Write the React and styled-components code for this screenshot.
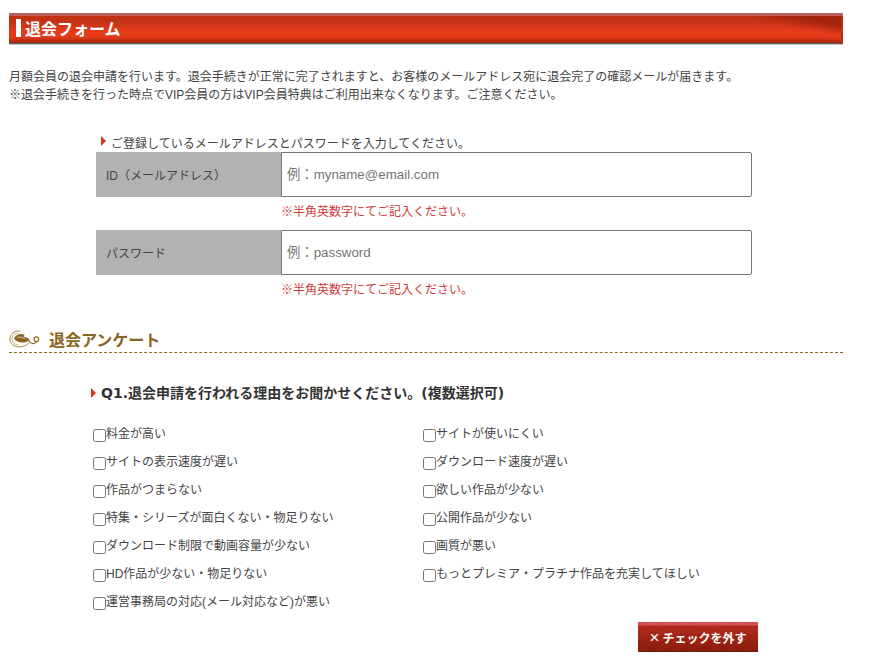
import styled, { createGlobalStyle } from 'styled-components';

const GlobalStyle = createGlobalStyle`
    html, body { margin: 0; background: #fff; }
    body {
        font-family: "Liberation Sans", "Noto Sans CJK JP", sans-serif;
        font-size: 12px;
        color: #333;
    }
`;

const reasonsLeft = [
    '料金が高い',
    'サイトの表示速度が遅い',
    '作品がつまらない',
    '特集・シリーズが面白くない・物足りない',
    'ダウンロード制限で動画容量が少ない',
    'HD作品が少ない・物足りない',
    '運営事務局の対応(メール対応など)が悪い',
];

const reasonsRight = [
    'サイトが使いにくい',
    'ダウンロード速度が遅い',
    '欲しい作品が少ない',
    '公開作品が少ない',
    '画質が悪い',
    'もっとプレミア・プラチナ作品を充実してほしい',
];

const Arrow = () => (
    <ArrowIcon viewBox="0 0 5 10"><path d="M0 0 L5 5 L0 10 Z" fill="#d9341a" /></ArrowIcon>
);

const Ornament = () => (
    <svg width="31" height="18" viewBox="0 0 31 18">
        <path d="M11 1 C5 0.5 0.8 4.2 0.8 9 C0.8 13.8 5 17.2 11 16.8 C15 16.5 18 15.2 20 12.8" fill="none" stroke="#a98a3c" strokeWidth="1" />
        <path d="M9 3 C5 3.6 3 6 3 9 C3 12 5 14.2 9 14.8" fill="none" stroke="#a98a3c" strokeWidth="0.7" />
        <path d="M5 8.5 C6.5 4.5 11 2.8 16 4.6 C13.8 5.8 14.5 7.2 17 7.6 C19.2 8 20.2 9 20.8 10.2 C15.5 13.6 8 13.4 5 8.5 Z" fill="#8a6420" />
        <path d="M8.5 7.6 C11 6.4 14 7.4 16 9" fill="none" stroke="#e8dcc0" strokeWidth="0.8" />
        <path d="M20 10.8 C21.5 14.4 26 14.4 28 11.5" fill="none" stroke="#8a6420" strokeWidth="1.1" />
        <circle cx="27.4" cy="9.2" r="2.3" fill="none" stroke="#8a6420" strokeWidth="1.1" />
    </svg>
);

const App = () => {
    return (
        <Page>
            <GlobalStyle />
            <TitleBar><TitleMark />退会フォーム</TitleBar>
            <Lead>
                月額会員の退会申請を行います。退会手続きが正常に完了されますと、お客様のメールアドレス宛に退会完了の確認メールが届きます。<br />
                ※退会手続きを行った時点でVIP会員の方はVIP会員特典はご利用出来なくなります。ご注意ください。
            </Lead>
            <FormArea>
                <FormNote><Arrow />ご登録しているメールアドレスとパスワードを入力してください。</FormNote>
                <FieldRow>
                    <FieldLabel>ID（メールアドレス）</FieldLabel>
                    <FieldInput placeholder="例：myname@email.com" />
                </FieldRow>
                <FieldError>※半角英数字にてご記入ください。</FieldError>
                <FieldRow>
                    <FieldLabel>パスワード</FieldLabel>
                    <FieldInput placeholder="例：password" />
                </FieldRow>
                <FieldError>※半角英数字にてご記入ください。</FieldError>
            </FormArea>
            <SurveyTitle><Ornament />退会アンケート</SurveyTitle>
            <Question><Arrow />Q1.退会申請を行われる理由をお聞かせください。(複数選択可)</Question>
            <Choices>
                <ChoiceColumn>
                    {reasonsLeft.map((text) => (
                        <Choice key={text}><ChoiceBox type="checkbox" />{text}</Choice>
                    ))}
                </ChoiceColumn>
                <ChoiceColumn>
                    {reasonsRight.map((text) => (
                        <Choice key={text}><ChoiceBox type="checkbox" />{text}</Choice>
                    ))}
                </ChoiceColumn>
            </Choices>
            <ButtonRow>
                <ClearButton type="button"><ClearMark>×</ClearMark>チェックを外す</ClearButton>
            </ButtonRow>
        </Page>
    );
};

const Page = styled.div`
    width: 891px;
    height: 668px;
    overflow: hidden;
    padding: 13px 0 0 9px;
    box-sizing: border-box;
`;

const TitleBar = styled.h2`
    display: flex;
    align-items: center;
    gap: 4px;
    width: 834px;
    height: 32px;
    margin: 0;
    padding: 0 0 2px 7px;
    box-sizing: border-box;
    color: #fff;
    font-size: 16px;
    font-weight: bold;
    background:
        linear-gradient(#bc6058, #bc6058) top / 100% 3px no-repeat,
        linear-gradient(#5f5f5f, #5f5f5f) 0 30px / 100% 1px no-repeat,
        linear-gradient(#c4c4c4, #c4c4c4) 0 31px / 100% 1px no-repeat,
        linear-gradient(#b8300f, #b8300f) right 0 / 2px 30px no-repeat,
        linear-gradient(191deg, #a3240d 0, #a3240d 9px, rgba(163, 36, 13, 0) 20px) right 3px / 90px 27px no-repeat,
        linear-gradient(#bf3014 3px, #c63316 10px, #e63a1a 18px, #e33a19 24px, #b82c10 28px, #a52a10 30px);
`;

const TitleMark = styled.span`
    width: 5px;
    height: 18px;
    background: #fff;
`;

const Lead = styled.p`
    margin: 23px 0 0;
    font-size: 12px;
    line-height: 18px;
    color: #444;
    white-space: nowrap;
`;

const FormArea = styled.div`
    margin: 32px 0 0 87px;
    width: 656px;
`;

const ArrowIcon = styled.svg`
    width: 5px;
    height: 10px;
    flex: none;
`;

const FormNote = styled.div`
    display: flex;
    align-items: flex-start;
    gap: 5px;
    height: 16px;
    padding-left: 5px;
    font-size: 12px;
    line-height: 16px;
    color: #444;
`;

const FieldRow = styled.div`
    display: flex;
    height: 45px;
`;

const FieldLabel = styled.div`
    display: flex;
    align-items: center;
    width: 185px;
    padding-left: 10px;
    box-sizing: border-box;
    background: #b2b2b2;
    font-size: 12px;
    color: #444;
`;

const FieldInput = styled.input`
    flex: 1;
    min-width: 0;
    padding: 0 5px;
    box-sizing: border-box;
    border: 1px solid #767676;
    border-radius: 0 2px 2px 0;
    background: #fff;
    font: 13.33px "Liberation Sans", "Noto Sans CJK JP", sans-serif;
    outline: none;

    &::placeholder {
        color: #757575;
        opacity: 1;
    }
`;

const FieldError = styled.div`
    height: 33px;
    padding-left: 185px;
    font-size: 12px;
    line-height: 30px;
    color: #d0393a;
`;

const SurveyTitle = styled.h3`
    display: flex;
    align-items: center;
    gap: 9px;
    width: 834px;
    height: 29px;
    margin: 16px 0 0;
    padding-top: 2px;
    box-sizing: border-box;
    border-bottom: 1px dashed #8c6a20;
    font-size: 16px;
    font-weight: bold;
    color: #8a6420;
`;

const Question = styled.div`
    display: flex;
    align-items: center;
    gap: 5px;
    margin: 29px 0 0 82px;
    font-family: "DejaVu Sans", "Noto Sans CJK JP", sans-serif;
    font-size: 14px;
    font-weight: bold;
    line-height: 22px;
    color: #333;
`;

const Choices = styled.div`
    display: grid;
    grid-template-columns: 330px 1fr;
    margin: 22px 0 0 84px;
`;

const ChoiceColumn = styled.div`
    display: flex;
    flex-direction: column;
`;

const Choice = styled.label`
    display: flex;
    align-items: flex-start;
    height: 28px;
    font-size: 12px;
    line-height: 16px;
    color: #444;
    white-space: nowrap;
`;

const ChoiceBox = styled.input`
    width: 13px;
    height: 13px;
    margin: 3px 0 0;
    flex: none;
`;

const ButtonRow = styled.div`
    display: flex;
    justify-content: flex-end;
    width: 749px;
    margin-top: 0;
`;

const ClearButton = styled.button`
    display: flex;
    align-items: center;
    justify-content: center;
    gap: 3px;
    width: 120px;
    height: 30px;
    padding: 0;
    border: 0;
    background:
        repeating-linear-gradient(135deg, rgba(255, 255, 255, 0.04) 0 1px, rgba(0, 0, 0, 0) 1px 3px),
        linear-gradient(#d05250 0, #d05250 3px, #b4281c 4px, #9a2010 60%, #8a1b0c 92%, #6f150a 100%);
    color: #fff;
    font: bold 12px "Liberation Sans", "Noto Sans CJK JP", sans-serif;
`;

const ClearMark = styled.span`
    font-size: 17px;
    font-weight: normal;
    line-height: 1;
`;

export default App;
